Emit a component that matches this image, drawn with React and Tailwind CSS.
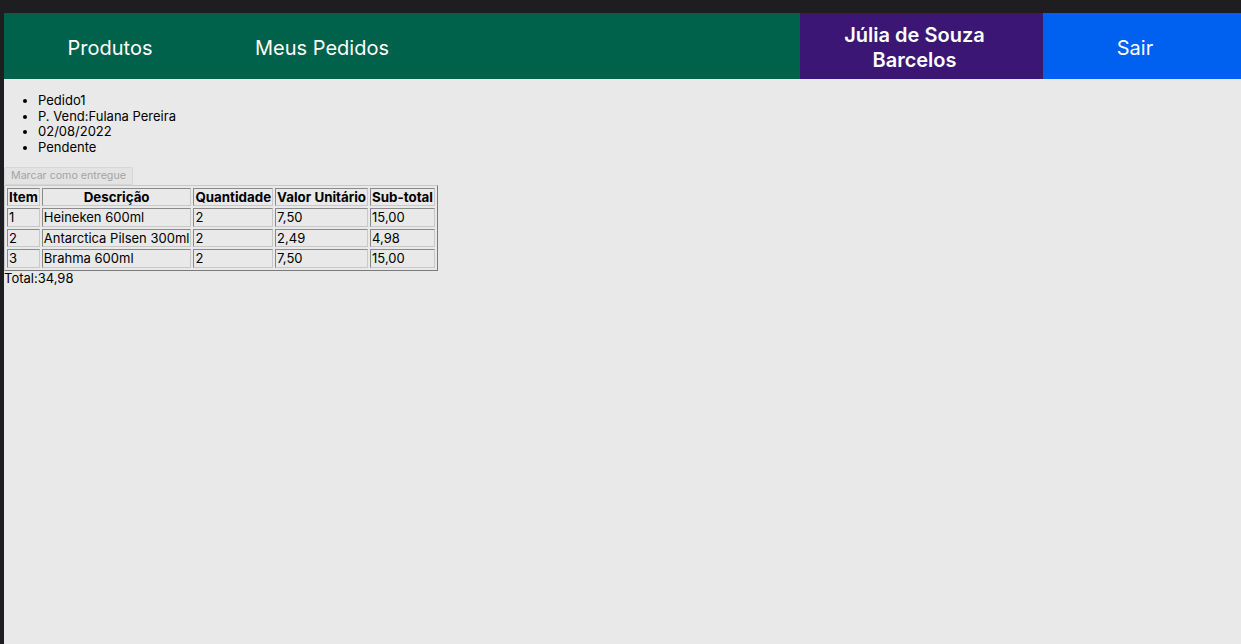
export default function App() {
  const rows = [
    ["1", "Heineken 600ml", "2", "7,50", "15,00"],
    ["2", "Antarctica Pilsen 300ml", "2", "2,49", "4,98"],
    ["3", "Brahma 600ml", "2", "7,50", "15,00"],
  ];
  const cell = "border border-t-[#8a8a8a] border-l-[#8a8a8a] border-r-[#c8c8c8] border-b-[#c8c8c8] px-[1px] py-[1px] leading-[14.5px]";
  return (
    <div className="w-[1241px] h-[644px] bg-[#1e1e20] pt-[13px] pl-[4px] overflow-hidden" style={{ fontFamily: "Inter, 'Noto Sans', sans-serif" }}>
      <div className="h-full bg-[#e9e9e9] text-black">
        <div className="flex h-[66px]">
          <div className="flex-1 flex bg-[#00624a] text-white text-[20px] pt-[4px]">
            <div className="w-[212px] flex items-center justify-center">Produtos</div>
            <div className="w-[212px] flex items-center justify-center">Meus Pedidos</div>
          </div>
          <div className="w-[243px] bg-[#3b1674] text-white text-[20px] font-semibold flex items-center justify-center text-center leading-[25px] pt-[4px] pr-[14px]">
            Júlia de Souza<br />Barcelos
          </div>
          <div className="w-[198px] bg-[#0060ef] text-white text-[20px] flex items-center justify-center pt-[4px] pr-[14px]">Sair</div>
        </div>
        <ul className="list-disc pl-[34px] mt-[14px] mb-[13px] text-[13px] leading-[15.7px]">
          <li>Pedido1</li>
          <li>P. Vend:Fulana Pereira</li>
          <li>02/08/2022</li>
          <li>Pendente</li>
        </ul>
        <button disabled className="block -mt-[2px] h-[18px] px-[6px] text-[10.67px] leading-[15px] text-[#a3a3a3] bg-[#e3e3e3] border border-[#d6d6d6] rounded-[2px]">
          Marcar como entregue
        </button>
        <table className="border-separate border-spacing-[2px] border border-t-[#c8c8c8] border-l-[#c8c8c8] border-r-[#7a7a7a] border-b-[#7a7a7a] text-[13px]">
          <thead>
            <tr>
              {["Item", "Descrição", "Quantidade", "Valor Unitário", "Sub-total"].map((h) => (
                <th key={h} className={cell + " font-bold text-center text-[13.33px]"}>{h}</th>
              ))}
            </tr>
          </thead>
          <tbody>
            {rows.map((r) => (
              <tr key={r[0]}>
                {r.map((c, i) => (
                  <td key={i} className={cell + " text-left"}>{c}</td>
                ))}
              </tr>
            ))}
          </tbody>
        </table>
        <div className="text-[13px] leading-[15.7px]">Total:34,98</div>
      </div>
    </div>
  );
}
